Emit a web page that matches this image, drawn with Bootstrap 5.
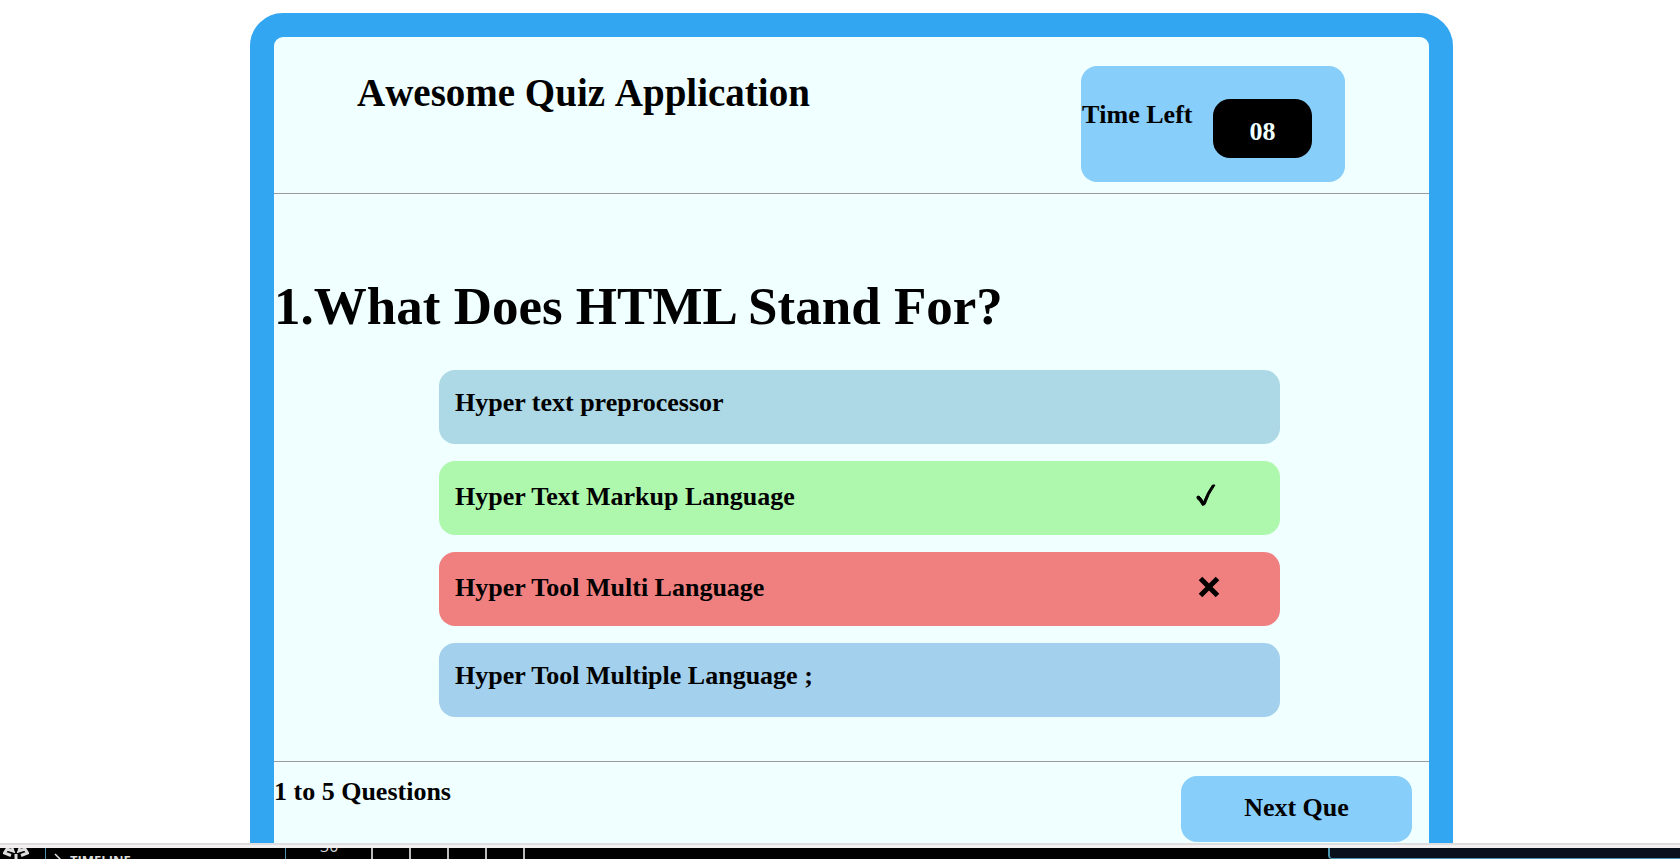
<!DOCTYPE html>
<html lang="en">
<head>
<meta charset="utf-8">
<meta name="viewport" content="width=device-width, initial-scale=1">
<title>Awesome Quiz Application</title>
<link href="https://cdn.jsdelivr.net/npm/bootstrap@5.3.0/dist/css/bootstrap.min.css" rel="stylesheet">
<style>
  body { font-family: "Liberation Serif", "Times New Roman", serif; font-size: 26px; line-height: 30px; font-weight: 700; font-kerning: none; color: #000; background: #fff; }
  .stage { min-height: 0; padding: 13px 227px 0 250px; }
  .quiz { background: #f0ffff; border: 24px solid #32a6f0; border-radius: 33px; }
  .quiz-head { height: 157px; padding: 29px 84px 0 83px; border-bottom: 1px solid #999; }
  .quiz-title { font-size: 39px; line-height: 44px; font-weight: 700; padding-top: 5px; }
  .timer { width: 264px; height: 116px; border-radius: 16px; background: #87cefa; padding: 33px 33px 0 1px; }
  .timer-label { padding-top: 1px; }
  .timer-value { width: 99px; height: 59px; border-radius: 17px; background: #000; color: #f0ffff; padding-top: 18px; }
  .question { font-size: 53px; line-height: 60px; font-weight: 700; font-kerning: normal; padding-top: 82px; margin-bottom: 34px; }
  .answers { gap: 17px; padding: 0 149px 44px 165px; }
  .answer { height: 74px; border: 0; border-radius: 16px; padding: 18px 60px 0 16px; font-weight: 700; color: #000; background: #add8e6; }
  .answer.judged { padding-top: 21px; }
  .answer.right { background: #aef8ae; }
  .answer.wrong { background: #f08080; }
  .answer.hovered { background: #a3d0ed; }
  .quiz-foot { border-top: 1px solid #999; padding: 14px 17px 16px 0; }
  .progress-text { padding-top: 1px; }
  .next-btn { width: 231px; height: 66px; border: 0; border-radius: 16px; background: #87cefa; color: #000; font-weight: 700; padding: 0 0 2px; }
  .edge { height: 5px; background: #f2f0f0; border-top: 2px solid #dedede; }
  .editor { height: 11px; background: #000; color: #ddd; font: 700 13px/14px "Open Sans", sans-serif; }
  .activity { width: 46px; border-right: 1px solid #4a94ad; padding-left: 3px; }
  .explorer { width: 240px; border-right: 1px solid #4a94ad; padding: 5px 0 0 8px; gap: 8px; }
  .line-no { width: 85px; height: 6px; padding-left: 34px; font: 400 16px/16px "Open Sans", sans-serif; }
  .guides { gap: 36px; }
  .guides span { width: 2px; background: #bbb; }
  .panel { width: 352px; background: #0b111c; border: 1px solid #4a94ad; border-width: 0 0 1px 2px; border-bottom-left-radius: 4px; }
</style>
</head>
<body class="vh-100 d-flex flex-column overflow-hidden">
  <main class="stage flex-grow-1 overflow-hidden">
    <section class="quiz">
      <header class="quiz-head d-flex justify-content-between align-items-start">
        <h1 class="quiz-title m-0">Awesome Quiz Application</h1>
        <div class="timer d-flex justify-content-between align-items-start">
          <span class="timer-label">Time Left</span>
          <span class="timer-value text-center">08</span>
        </div>
      </header>
      <h2 class="question">1.What Does HTML Stand For?</h2>
      <div class="answers d-flex flex-column">
        <button type="button" class="answer d-flex align-items-start">Hyper text preprocessor</button>
        <button type="button" class="answer judged right d-flex align-items-start justify-content-between">Hyper Text Markup Language
          <svg width="28" height="30" viewBox="0 0 28 30" aria-hidden="true"><path d="M5 14.500 7 14Q9.500 16 11.500 20 15.500 9.500 20.500 3H23Q16.500 12 13 22.500L10.500 23.500Q8 18.500 5 16.500Z" stroke="#000" stroke-width="1"/></svg>
        </button>
        <button type="button" class="answer judged wrong d-flex align-items-start justify-content-between">Hyper Tool Multi Language
          <svg width="28" height="30" viewBox="0 0 28 30" aria-hidden="true"><path d="M8.500 5.500 25.500 22.500M25.500 5.500 8.500 22.500" stroke="#000" stroke-width="5"/></svg>
        </button>
        <button type="button" class="answer hovered d-flex align-items-start">Hyper Tool Multiple Language ;</button>
      </div>
      <footer class="quiz-foot d-flex justify-content-between align-items-start">
        <span class="progress-text">1 to 5 Questions</span>
        <button type="button" class="next-btn">Next Que</button>
      </footer>
    </section>
  </main>
  <div class="edge flex-shrink-0"></div>
  <div class="editor d-flex flex-shrink-0 overflow-hidden">
    <div class="activity flex-shrink-0">
      <svg class="d-block" width="26" height="11" viewBox="0 0 26 11" fill="none" stroke="#ddd" stroke-width="3" aria-hidden="true"><path d="M9 0 10 3 4 1 1.500 5 8 7.500M17 0 16 3 22 1 24.500 5 18 7.500M13 6V11"/></svg>
    </div>
    <div class="explorer d-flex flex-shrink-0">
      <svg class="flex-shrink-0" width="8" height="12" viewBox="0 0 8 12" fill="none" stroke="#ddd" stroke-width="1.500" aria-hidden="true"><path d="M1 1 6 6 1 11"/></svg>
      <span>TIMELINE</span>
    </div>
    <div class="line-no d-flex align-items-end flex-shrink-0 overflow-hidden"><span>30</span></div>
    <div class="guides d-flex"><span></span><span></span><span></span><span></span><span></span></div>
    <div class="panel ms-auto"></div>
  </div>
<script src="https://cdn.jsdelivr.net/npm/bootstrap@5.3.0/dist/js/bootstrap.bundle.min.js"></script>
</body>
</html>
